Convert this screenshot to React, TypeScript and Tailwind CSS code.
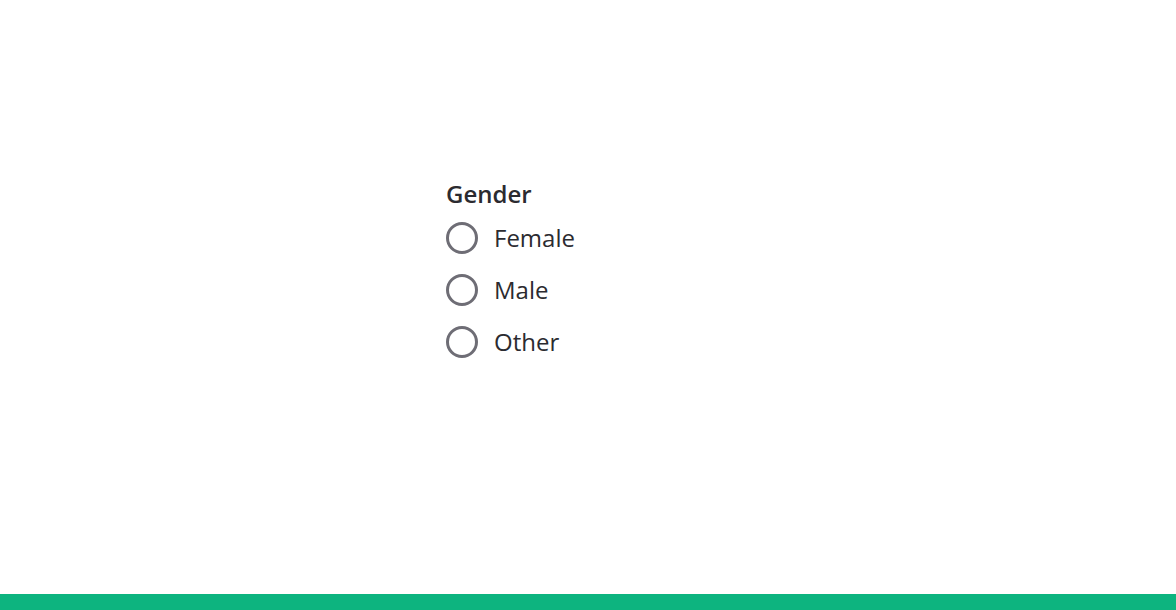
export default function App() {
  const options = ["Female", "Male", "Other"];
  return (
    <div className="w-full h-[610px] flex flex-col bg-white font-['Open_Sans',sans-serif]">
      <div className="flex-1 pl-[446px] pt-[178px]">
        <fieldset>
          <legend className="text-[24px] leading-[32px] font-semibold text-[#2b2b30]">Gender</legend>
          <div className="flex flex-col gap-[20px] mt-[12px]">
            {options.map((o) => (
              <label key={o} className="flex items-center gap-[16px] h-[32px]">
                <span className="w-[32px] h-[32px] rounded-full border-[3px] border-[#6e6d75] bg-white" />
                <span className="text-[24px] text-[#2b2b30]">{o}</span>
              </label>
            ))}
          </div>
        </fieldset>
      </div>
      <div className="h-[16px] bg-[#0db47f]" />
    </div>
  );
}
